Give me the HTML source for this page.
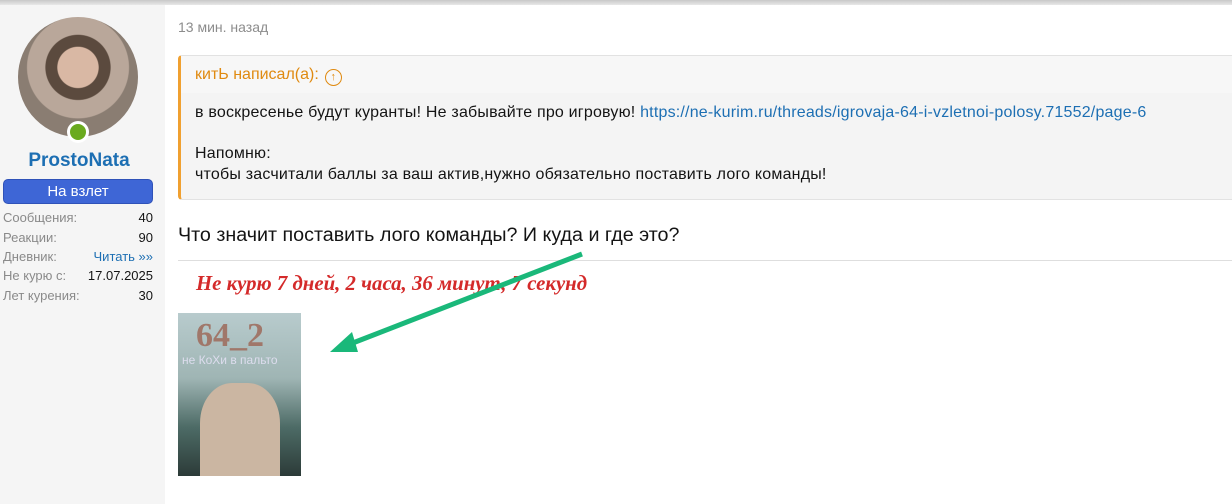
<!DOCTYPE html>
<html><head><meta charset="utf-8"><style>
*{margin:0;padding:0;box-sizing:border-box}
body{width:1232px;height:504px;overflow:hidden;background:#fff;font-family:"Liberation Sans","DejaVu Sans",sans-serif;position:relative;color:#141414}
.top{position:absolute;left:0;top:0;width:1232px;height:5px;background:linear-gradient(#c8c8c8,#e8e8e8)}
.side{position:absolute;left:0;top:5px;width:165px;height:499px;background:#f5f5f5}
.av{position:absolute;left:18px;top:17px;width:120px;height:120px;border-radius:50%;background:radial-gradient(circle at 50% 42%,#d9b8a4 0 22%,#5b4a3e 23% 35%,#b9a79a 36% 55%,#8a7d72 56% 75%,#d8c2c6 76%)}
.dot{position:absolute;left:67px;top:121px;width:22px;height:22px;border-radius:50%;background:#fff}
.dot i{position:absolute;left:3px;top:3px;width:16px;height:16px;border-radius:50%;background:#6aaa1e}
.name{position:absolute;left:0;width:158px;top:150px;text-align:center;font-weight:bold;font-size:19px;color:#1d6fb3}
.btn{position:absolute;left:3px;top:179px;width:150px;height:25px;border-radius:5px;background:#3e66d6;border:1px solid #2f52b8;color:#fff;text-align:center;font-size:15px;line-height:23px}
.st{position:absolute;left:3px;width:150px;font-size:13px;color:#8a8a8a;line-height:19px}
.st b{float:right;font-weight:normal;color:#141414}
.st b.l{color:#1d6fb3}
.time{position:absolute;left:178px;top:19px;font-size:14px;color:#8c8c8c}
.q{position:absolute;left:178px;top:55px;width:1054px;height:145px;background:#f4f4f4;border-top:1px solid #e2e2e2;border-bottom:1px solid #e2e2e2;border-left:3px solid #f0a030;border-radius:4px 0 0 4px}
.qh{height:37px;background:#f7f7f7;padding:10px 0 0 14px;color:#e08a10;font-size:16px}
.qh span{display:inline-block;width:17px;height:17px;border:1.6px solid #e08a10;border-radius:50%;vertical-align:-1px;margin-left:6px;text-align:center;font-size:11px;line-height:14px;font-weight:bold}
.qb{padding:10px 0 0 14px;font-size:16px;line-height:20.5px;letter-spacing:0.2px}
.qb a{color:#1d6fb3;text-decoration:none}
.msg{position:absolute;left:178px;top:224px;font-size:19.7px}
.sep{position:absolute;left:178px;top:260px;width:1054px;height:1px;background:#dedede}
.sig{position:absolute;left:196px;top:272px;font-family:"Liberation Serif",serif;font-style:italic;font-weight:bold;font-size:20.8px;color:#d42a2a}
.img{position:absolute;left:178px;top:313px;width:123px;height:163px;background:linear-gradient(#b8cbcd 0%,#9fb5b4 40%,#4d6b66 70%,#2c3b38 100%);overflow:hidden}
.img .t{position:absolute;left:18px;top:4px;font-family:"Liberation Serif",serif;font-weight:bold;font-size:34px;color:#a0776a}
.img .s{position:absolute;left:4px;top:40px;font-size:12px;color:#dde}
.img .c{position:absolute;left:22px;top:70px;width:80px;height:100px;background:#cbb6a2;border-radius:40% 40% 0 0}
</style></head><body>
<div class="top"></div>
<div class="side"></div>
<div class="av"></div>
<div class="dot"><i></i></div>
<div class="name">ProstoNata</div>
<div class="btn">На взлет</div>
<div class="st" style="top:208px">Сообщения:<b>40</b></div>
<div class="st" style="top:228px">Реакции:<b>90</b></div>
<div class="st" style="top:247px">Дневник:<b class="l">Читать »»</b></div>
<div class="st" style="top:266px">Не курю с:<b>17.07.2025</b></div>
<div class="st" style="top:286px">Лет курения:<b>30</b></div>
<div class="time">13 мин. назад</div>
<div class="q"><div class="qh">китЬ написал(а):<span>↑</span></div>
<div class="qb">в воскресенье будут куранты! Не забывайте про игровую! <a>https://ne-kurim.ru/threads/igrovaja-64-i-vzletnoi-polosy.71552/page-6</a><br><br>Напомню:<br>чтобы засчитали баллы за ваш актив,нужно обязательно поставить лого команды!</div></div>
<div class="msg">Что значит поставить лого команды? И куда и где это?</div>
<div class="sep"></div>
<div class="sig">Не курю  7 дней, 2 часа, 36 минут, 7 секунд</div>
<div class="img"><div class="t">64_2</div><div class="s">не КоХи в пальто</div><div class="c"></div></div>
<svg style="position:absolute;left:0;top:0" width="1232" height="504"><line x1="582" y1="254" x2="345" y2="346" stroke="#1ab87a" stroke-width="5"/><polygon points="330,352 352,332 358,352" fill="#1ab87a"/></svg>
</body></html>
